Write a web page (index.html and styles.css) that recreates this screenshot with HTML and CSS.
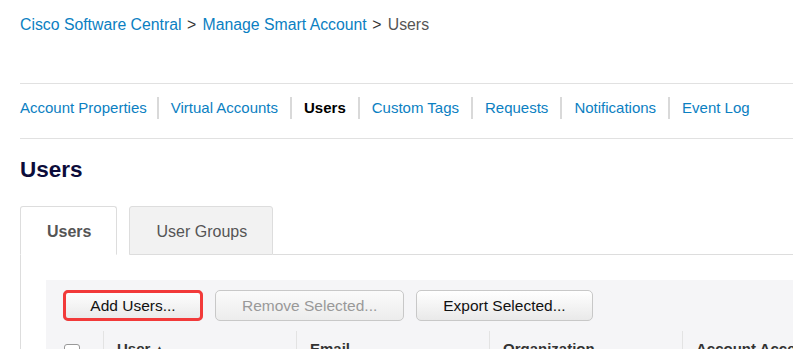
FILE: index.html
```html
<!DOCTYPE html>
<html lang="en">
<head>
  <meta charset="UTF-8" />
  <title>Users - Manage Smart Account</title>
  <link rel="stylesheet" href="styles.css">
</head>
<body>
  <div class="page">
    <div class="breadcrumb">
      <a href="#">Cisco Software Central</a>
      <span class="sep">&gt;</span>
      <a href="#">Manage Smart Account</a>
      <span class="sep">&gt;</span>
      <span class="current">Users</span>
    </div>

    <nav class="sub-nav">
      <a href="#">Account Properties</a>
      <a href="#">Virtual Accounts</a>
      <a href="#" class="active">Users</a>
      <a href="#">Custom Tags</a>
      <a href="#">Requests</a>
      <a href="#">Notifications</a>
      <a href="#">Event Log</a>
    </nav>

    <h1>Users</h1>

    <div class="tabs">
      <div class="tab active">Users</div>
      <div class="tab">User Groups</div>
      <div class="tab-rest"></div>
    </div>

    <div class="panel">
      <div class="grid">
        <div class="toolbar">
          <button type="button" class="btn highlight">Add Users...</button>
          <button type="button" class="btn" disabled>Remove Selected...</button>
          <button type="button" class="btn">Export Selected...</button>
        </div>
        <div class="grid-head">
          <div class="cell check"><span class="checkbox"></span></div>
          <div class="cell">User <span class="sort">&#9650;</span></div>
          <div class="cell">Email</div>
          <div class="cell">Organization</div>
          <div class="cell">Account Access</div>
        </div>
      </div>
    </div>
  </div>
</body>
</html>
```

FILE: styles.css
```css
* {
  margin: 0;
  padding: 0;
  box-sizing: border-box;
}
html,
body {
  overflow: hidden;
}
body {
  font-family: "Liberation Sans", Arial, sans-serif;
  background-color: #fff;
  color: #333;
}
a {
  text-decoration: none;
  color: #0b80c2;
}
.page {
  padding-left: 20px;
  width: 1000px;
}
.breadcrumb {
  font-size: 15.8px;
  line-height: 18px;
  padding-top: 16px;
  height: 84px;
  border-bottom: 1px solid #e1e1e1;
}
.breadcrumb .sep {
  color: #333;
  margin: 0 2px 0 1px;
}
.breadcrumb .current {
  color: #555;
}
.sub-nav {
  display: flex;
  align-items: center;
  padding: 13px 0 19px;
  border-bottom: 1px solid #e1e1e1;
}
.sub-nav a {
  font-size: 15px;
  line-height: 22px;
  padding: 0 12px;
  border-left: 2px solid #d9d9d9;
}
.sub-nav a:first-child {
  padding: 0 10px 0 0;
  border-left: none;
}
.sub-nav a.active {
  color: #000;
  font-weight: bold;
}
h1 {
  font-size: 22.5px;
  line-height: 26px;
  color: #0c0c3a;
  margin: 18px 0 23px;
}
.tabs {
  display: flex;
  align-items: flex-end;
  height: 49px;
}
.tab {
  height: 49px;
  padding: 0 25px 0 26px;
  font-size: 16px;
  line-height: 49px;
  color: #555;
  background-color: #f2f2f2;
  border: 1px solid #ddd;
  border-radius: 3px 3px 0 0;
  margin-right: 12px;
}
.tab.active {
  background-color: #fff;
  font-weight: bold;
  border-bottom-color: #fff;
}
.tab-rest {
  flex: 1;
  border-bottom: 1px solid #ddd;
  margin-left: -12px;
}
.panel {
  border-left: 1px solid #ddd;
  padding: 25px 0 0 25px;
  height: 120px;
}
.grid {
  background-color: #f5f5f7;
}
.toolbar {
  display: flex;
  gap: 12px;
  padding: 10px 17px;
}
.btn {
  font-family: "Liberation Sans", Arial, sans-serif;
  font-size: 15.5px;
  height: 31px;
  padding: 0 26px;
  color: #111;
  background: linear-gradient(#ffffff, #e9e9e9);
  border: 1px solid #c8c8c8;
  border-radius: 5px;
}
.btn:disabled {
  color: #999;
  background: linear-gradient(#fbfbfb, #ececec);
}
.btn.highlight {
  width: 140px;
  padding: 0;
  outline: 3px solid #f23a3a;
  outline-offset: -3px;
}
.grid-head {
  display: flex;
}
.cell {
  width: 193px;
  height: 40px;
  padding: 9px 13px;
  font-size: 15px;
  font-weight: bold;
  color: #333;
  border-left: 1px solid #e3e3e3;
}
.cell.check {
  width: 57px;
  padding: 13px 0 0 18px;
  border-left: none;
}
.checkbox {
  display: block;
  width: 16px;
  height: 16px;
  border: 1px solid #999;
  border-radius: 3px;
  background-color: #fff;
}
.sort {
  font-size: 10px;
  vertical-align: 2px;
}
```
